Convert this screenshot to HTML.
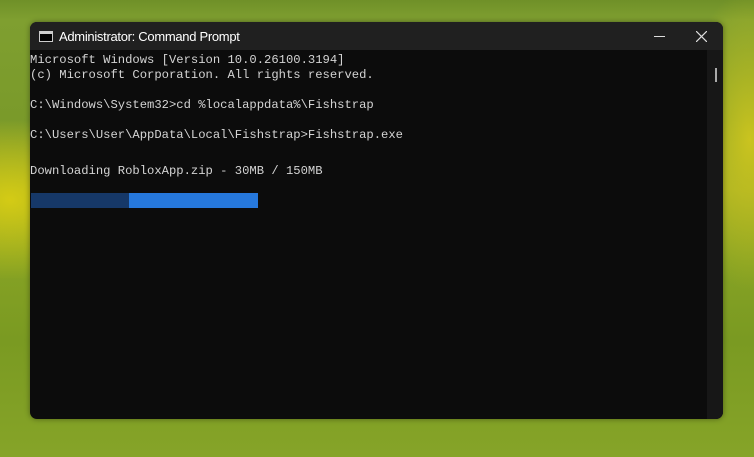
<!DOCTYPE html>
<html><head><meta charset="utf-8"><style>
html,body{margin:0;padding:0}
body{width:754px;height:457px;overflow:hidden;position:relative;
background:
radial-gradient(ellipse 110px 80px at 10px 200px,rgba(215,205,20,.95),rgba(215,205,20,0) 100%),
radial-gradient(ellipse 70px 150px at 750px 140px,rgba(210,200,30,.9),rgba(210,200,30,0) 100%),
linear-gradient(180deg,#6f9028 0px,#7f9f30 20px,#7a9a2a 120px,#98a826 190px,#86a224 260px,#7a9a22 340px,#86a428 457px);}
.win{position:absolute;left:30px;top:22px;width:693px;height:397px;background:#0c0c0c;border-radius:7px;overflow:hidden;box-shadow:0 0 6px rgba(0,0,0,.4)}
.tb{height:28px;background:#202020;position:relative;font:13px "Liberation Sans",sans-serif;color:#fff}
.tb .t{position:absolute;left:29px;top:7px;letter-spacing:-.3px}
.ic{position:absolute;left:9px;top:9px;width:12px;height:9px;border:1px solid #ccc;background:#000}
.ic:before{content:"";position:absolute;left:0;right:0;top:0;height:2px;background:#ccc}
.min{position:absolute;left:624px;top:14px;width:11px;height:1px;background:#ddd}
.sb{position:absolute;right:0;top:28px;width:16px;bottom:0;background:#171717}
.th{position:absolute;left:685px;top:46px;width:2px;height:14px;background:#aaa}
pre{position:absolute;left:0;top:31px;margin:0;font:12.2px/15px "Liberation Mono",monospace;color:#d4d4d4}
.b1{position:absolute;left:1px;top:171px;width:98px;height:15px;background:#163868}
.b2{position:absolute;left:99px;top:171px;width:129px;height:15px;background:#2678dc}
</style></head><body>
<div class="win">
<div class="tb"><div class="ic"></div><span class="t">Administrator: Command Prompt</span><div class="min"></div>
<svg style="position:absolute;left:666px;top:9px" width="11" height="11"><path d="M0 0L11 11M11 0L0 11" stroke="#ddd" stroke-width="1.2"/></svg></div>
<div class="sb"></div><div class="th"></div>
<pre>Microsoft Windows [Version 10.0.26100.3194]
(c) Microsoft Corporation. All rights reserved.

C:\Windows\System32>cd %localappdata%\Fishstrap

C:\Users\User\AppData\Local\Fishstrap>Fishstrap.exe
</pre>
<pre style="top:142px">Downloading RobloxApp.zip - 30MB / 150MB</pre>
<div class="b1"></div><div class="b2"></div>
</div>
</body></html>
